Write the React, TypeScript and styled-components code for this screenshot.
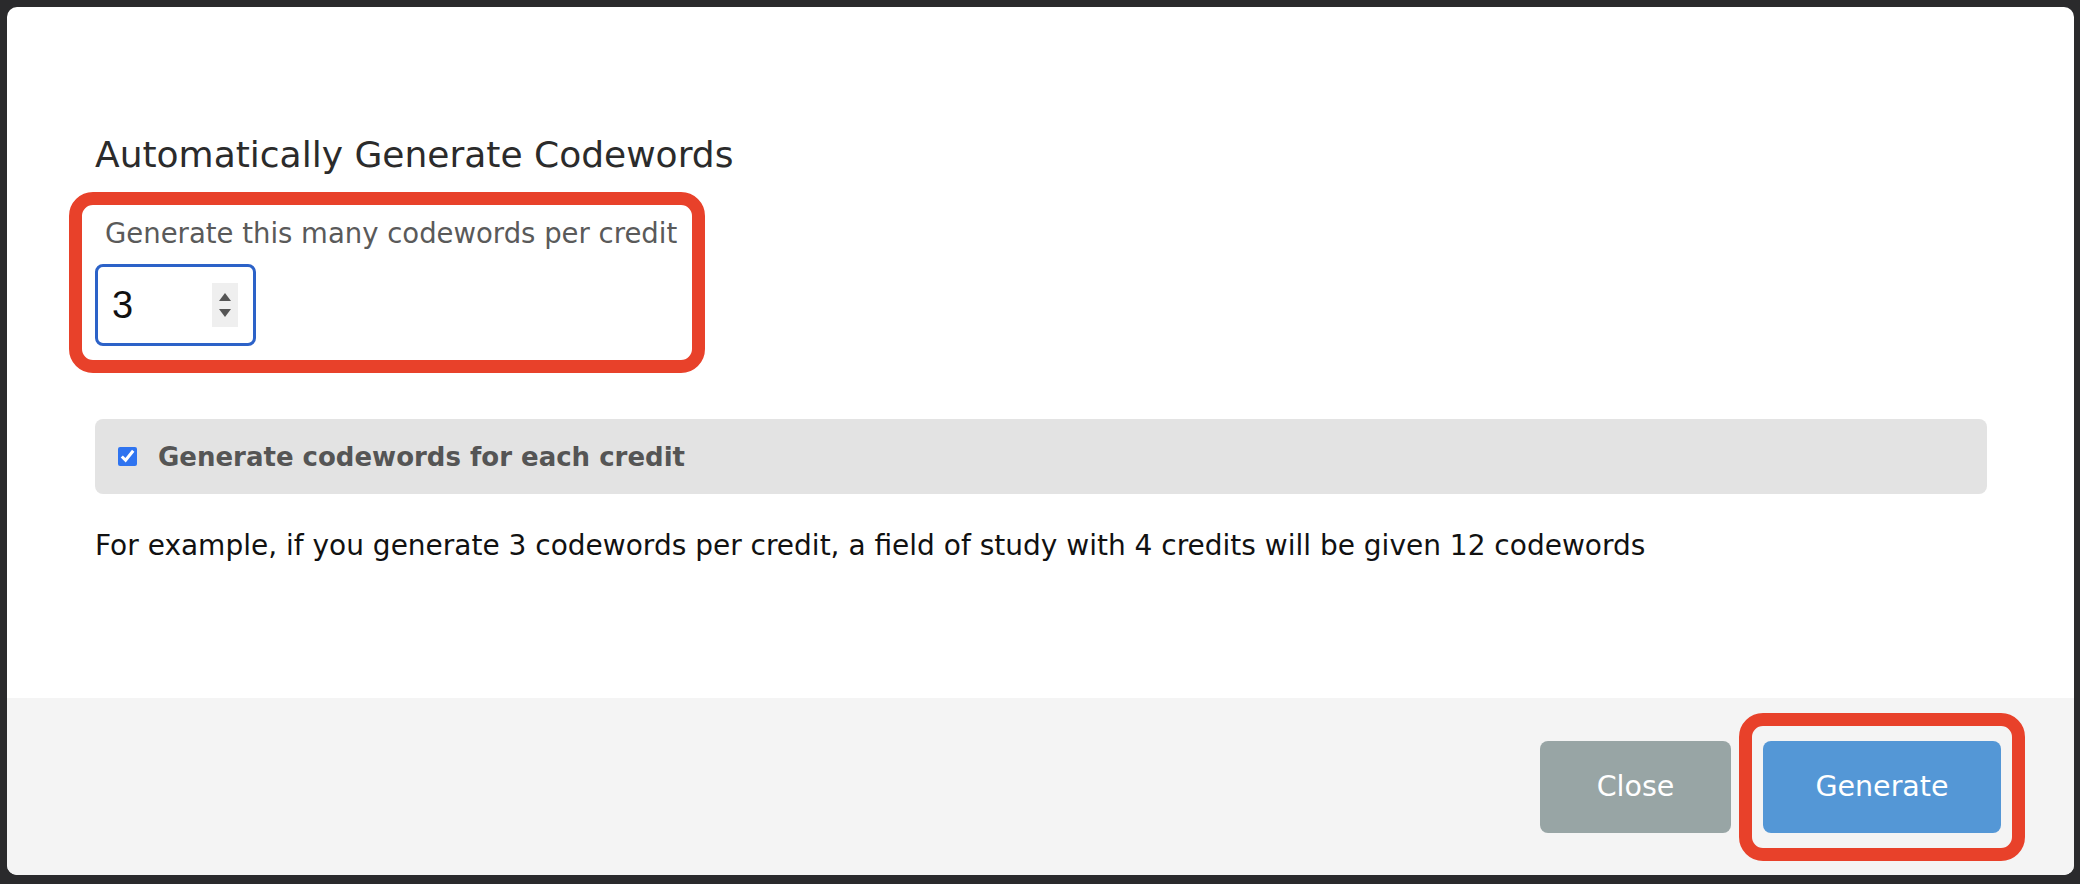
import React from "react";
import styled, { createGlobalStyle } from "styled-components";

const GlobalStyle = createGlobalStyle`
  html, body {
    margin: 0;
    padding: 0;
    background: #2a2a2c;
  }
  body {
    font-family: "DejaVu Sans", "Liberation Sans", sans-serif;
  }
`;

const Frame = styled.div`
  width: 2080px;
  height: 884px;
  box-sizing: border-box;
  padding: 7px 6px 9px 7px;
  display: flex;
`;

const Modal = styled.div`
  flex: 1;
  display: flex;
  flex-direction: column;
  background: #ffffff;
  border-radius: 10px;
  overflow: hidden;
`;

const Body = styled.div`
  flex: 1;
  padding: 124px 87px 0 88px;
  display: flex;
  flex-direction: column;
`;

const Title = styled.h2`
  margin: 0;
  font-size: 36px;
  line-height: 48px;
  font-weight: normal;
  color: #2b2b2b;
`;

const Highlight = styled.div<{ $inset: string }>`
  display: inline-flex;
  flex-direction: column;
  align-self: flex-start;
  border: 13px solid #e8412a;
  border-radius: 24px;
  padding: ${(p) => p.$inset};
`;

const FieldHighlight = styled(Highlight)`
  margin: 13px 0 0 -26px;
`;

const ButtonHighlight = styled(Highlight)`
  align-self: center;
`;

const FieldLabel = styled.label`
  font-size: 27.5px;
  line-height: 38px;
  color: #5a5a5a;
  padding-left: 10px;
  margin-bottom: 12px;
`;

const NumberBox = styled.div`
  width: 161px;
  height: 82px;
  box-sizing: border-box;
  border: 3px solid #2c62c8;
  border-radius: 8px;
  display: flex;
  align-items: center;
  padding: 0 15px 0 14px;
`;

const NumberInput = styled.input`
  flex: 1;
  min-width: 0;
  border: none;
  outline: none;
  background: transparent;
  font-family: "Liberation Sans", Arial, sans-serif;
  font-size: 38px;
  color: #111;
  padding: 0;
`;

const Spinner = styled.span`
  width: 26px;
  height: 44px;
  background: #efefef;
  display: flex;
  flex-direction: column;
  align-items: center;
  justify-content: center;
  gap: 8px;
`;

const Arrow = styled.span<{ $down?: boolean }>`
  width: 0;
  height: 0;
  border-left: 6px solid transparent;
  border-right: 6px solid transparent;
  ${(p) =>
    p.$down
      ? "border-top: 8px solid #555;"
      : "border-bottom: 8px solid #555;"}
`;

const OptionBar = styled.label`
  margin-top: 46px;
  height: 75px;
  background: #e3e3e3;
  border-radius: 8px;
  display: flex;
  align-items: center;
  padding-left: 23px;
  gap: 21px;
  font-size: 26px;
  font-weight: bold;
  color: #555555;
`;

const Check = styled.input`
  width: 19px;
  height: 19px;
  margin: 0;
  accent-color: #2f74f0;
`;

const Note = styled.p`
  margin: 33px 0 0 0;
  font-size: 28px;
  line-height: 38px;
  color: #111111;
`;

const Footer = styled.div`
  height: 177px;
  background: #f4f4f4;
  display: flex;
  align-items: center;
  justify-content: flex-end;
  padding-right: 49px;
  gap: 8px;
`;

const Button = styled.button<{ $variant: "muted" | "primary" }>`
  height: 92px;
  width: ${(p) => (p.$variant === "primary" ? "238px" : "191px")};
  border: none;
  border-radius: 8px;
  font-family: "DejaVu Sans", "Liberation Sans", sans-serif;
  font-size: 28.5px;
  color: #ffffff;
  background: ${(p) => (p.$variant === "primary" ? "#5497d6" : "#98a5a5")};
`;

export default function App() {
  return (
    <>
      <GlobalStyle />
      <Frame>
        <Modal>
          <Body>
            <Title>Automatically Generate Codewords</Title>
            <FieldHighlight $inset="9px 15px 14px 13px">
              <FieldLabel>Generate this many codewords per credit</FieldLabel>
              <NumberBox>
                <NumberInput type="text" value="3" readOnly />
                <Spinner>
                  <Arrow />
                  <Arrow $down />
                </Spinner>
              </NumberBox>
            </FieldHighlight>
            <OptionBar>
              <Check type="checkbox" defaultChecked />
              Generate codewords for each credit
            </OptionBar>
            <Note>
              For example, if you generate 3 codewords per credit, a field of study with 4 credits
              will be given 12 codewords
            </Note>
          </Body>
          <Footer>
            <Button $variant="muted">Close</Button>
            <ButtonHighlight $inset="15px 11px">
              <Button $variant="primary">Generate</Button>
            </ButtonHighlight>
          </Footer>
        </Modal>
      </Frame>
    </>
  );
}
